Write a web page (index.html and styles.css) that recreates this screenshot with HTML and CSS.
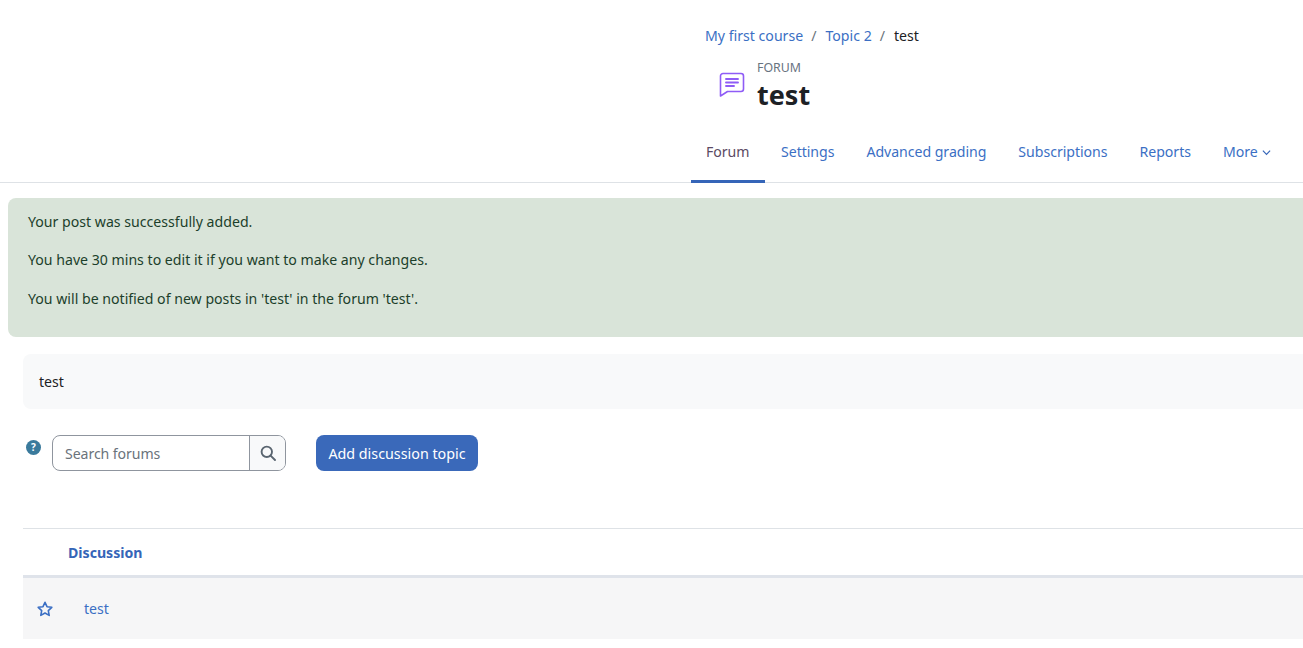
FILE: index.html
```html
<!DOCTYPE html>
<html lang="en">
<head>
<meta charset="utf-8">
<title>test</title>
<link rel="stylesheet" href="styles.css">
</head>
<body>
<header class="page-header">
  <nav class="crumbs">
    <a href="#" class="crumb-link">My first course</a><span class="sep">/</span><a href="#" class="crumb-link">Topic 2</a><span class="sep">/</span><span class="crumb-now">test</span>
  </nav>
  <div class="title-row">
    <svg class="forum-icon" viewBox="0 0 26 26" width="26" height="26" fill="none" stroke="#8f5cf6" stroke-width="1.6" stroke-linejoin="round" stroke-linecap="round">
      <path d="M4 1.500h18a2.500 2.500 0 0 1 2.500 2.500v13a2.500 2.500 0 0 1-2.500 2.500H8.500L1.500 24V4A2.500 2.500 0 0 1 4 1.500z"/>
      <path d="M7 7h12M7 10.500h12M7 14h8" stroke-width="1.900"/>
    </svg>
    <div class="title-text">
      <div class="kicker">FORUM</div>
      <h1 class="title">test</h1>
    </div>
  </div>
  <nav class="tabs">
    <a href="#" class="tab tab-active">Forum</a>
    <a href="#" class="tab">Settings</a>
    <a href="#" class="tab">Advanced grading</a>
    <a href="#" class="tab">Subscriptions</a>
    <a href="#" class="tab">Reports</a>
    <a href="#" class="tab">More
      <svg class="chev" viewBox="0 0 10 10" width="9" height="9" fill="none" stroke="#3565b8" stroke-width="1.300"><path d="M1 3l4 4 4-4"/></svg>
    </a>
  </nav>
</header>
<main class="content">
  <div class="alert">
    <p>Your post was successfully added.</p>
    <p>You have 30 mins to edit it if you want to make any changes.</p>
    <p>You will be notified of new posts in 'test' in the forum 'test'.</p>
  </div>
  <div class="inner">
    <div class="intro">test</div>
    <div class="tools">
      <span class="help">?</span>
      <div class="search">
        <span class="search-input">Search forums</span>
        <span class="search-btn">
          <svg viewBox="0 0 16 16" width="16" height="16" fill="none" stroke="#5a6570" stroke-width="1.900"><circle cx="6.800" cy="6.800" r="5.200"/><path d="M10.600 10.600l4.400 4.400" stroke-linecap="round"/></svg>
        </span>
      </div>
      <a href="#" class="add-btn">Add discussion topic</a>
    </div>
    <div class="table">
      <div class="thead"><a href="#" class="th">Discussion</a></div>
      <div class="row">
        <svg class="star" viewBox="0 0 16 16" width="16" height="16" fill="none" stroke="#3b6fc4" stroke-width="1.600" stroke-linejoin="round"><path d="M8 1.300l2 4.400 4.800.6-3.500 3.300.9 4.800L8 12l-4.200 2.400.9-4.800L1.200 6.300l4.800-.6z"/></svg>
        <a href="#" class="row-link">test</a>
      </div>
    </div>
  </div>
</main>
</body>
</html>
```

FILE: styles.css
```css
* { box-sizing: border-box; }
html, body { margin: 0; height: 100%; overflow: hidden; }
body {
  width: 1303px;
  height: 648px;
  background: #fff;
  color: #1d2125;
  font-family: "Noto Sans", "Open Sans", sans-serif;
  font-size: 14.13px;
  line-height: 1.5;
}
a { text-decoration: none; color: #3b6fc4; }

.page-header {
  height: 183px;
  padding-top: 25px;
  border-bottom: 1px solid #dee2e6;
  display: flex;
  flex-direction: column;
}
.crumbs {
  margin-left: 705px;
  height: 22px;
  display: flex;
  align-items: center;
}
.crumb-link { color: #3b6fc4; }
.sep { margin: 0 9px 0 8px; color: #6a737b; }
.crumb-now { color: #1d2125; }

.title-row {
  margin: 12px 0 0 719px;
  display: flex;
  height: 50px;
}
.forum-icon { margin-top: 13px; flex: none; }
.title-text { margin-left: 12px; }
.kicker { font-size: 12.35px; line-height: 18px; color: #68737f; }
.title { margin: 2px 0 0; font-size: 27px; line-height: 32px; font-weight: 700; color: #1d2125; }

.tabs {
  margin: auto 0 -1px 691px;
  display: flex;
  height: 60px;
  letter-spacing: -0.04px;
}
.tab {
  padding: 18px 16px 0;
  height: 60px;
  display: flex;
  align-items: flex-start;
  gap: 4px;
  line-height: 22px;
  white-space: nowrap;
}
.tab-active {
  padding: 18px 15px 0;
  width: 74px;
  color: #5b4a63;
  border-bottom: 3px solid #3565b8;
}
.chev { margin-top: 7px; }

.content { padding: 15px 0 0 8px; }
.alert {
  height: 139px;
  padding: 13px 20px 0;
  background: #d9e4d9;
  border-radius: 8px 0 0 8px;
  color: #1c3f2b;
}
.alert p { margin: 0 0 17px; line-height: 21px; }
.alert p:nth-child(2) { margin-bottom: 18px; }

.inner { margin: 17px 0 0 15px; }
.intro {
  height: 55px;
  padding: 0 16px;
  background: #f8f9fa;
  border-radius: 8px 0 0 8px;
  display: flex;
  align-items: center;
}
.tools {
  margin-top: 26px;
  display: flex;
  align-items: flex-start;
  height: 93px;
}
.help {
  margin: 5px 11px 0 3px;
  width: 15px;
  height: 15px;
  border-radius: 50%;
  background: #3a7a9c;
  color: #fff;
  font-size: 10px;
  font-weight: 700;
  line-height: 15px;
  text-align: center;
}
.search {
  width: 234px;
  height: 36px;
  display: flex;
  border: 1px solid #8f959e;
  border-radius: 8px;
  overflow: hidden;
}
.search-input {
  flex: 1;
  padding-left: 12px;
  color: #6a737b;
  line-height: 35px;
  letter-spacing: -0.08px;
}
.search-btn {
  width: 36px;
  background: #f8f9fa;
  border-left: 1px solid #8f959e;
  display: flex;
  align-items: center;
  justify-content: center;
}
.add-btn {
  margin-left: 30px;
  width: 162px;
  height: 36px;
  background: #3a69ba;
  color: #fff;
  border-radius: 8px;
  text-align: center;
  line-height: 37px;
  font-size: 14.3px;
}

.thead {
  height: 50px;
  border-top: 1px solid #dee2e6;
  border-bottom: 3px solid #dfe3ea;
  padding: 2px 0 0 45px;
  display: flex;
  align-items: center;
}
.th { font-weight: 700; color: #3565b8; }
.row {
  height: 61px;
  background: #f6f6f7;
  display: flex;
  align-items: center;
  padding-left: 14px;
}
.row-link { margin-left: 31px; }
```
